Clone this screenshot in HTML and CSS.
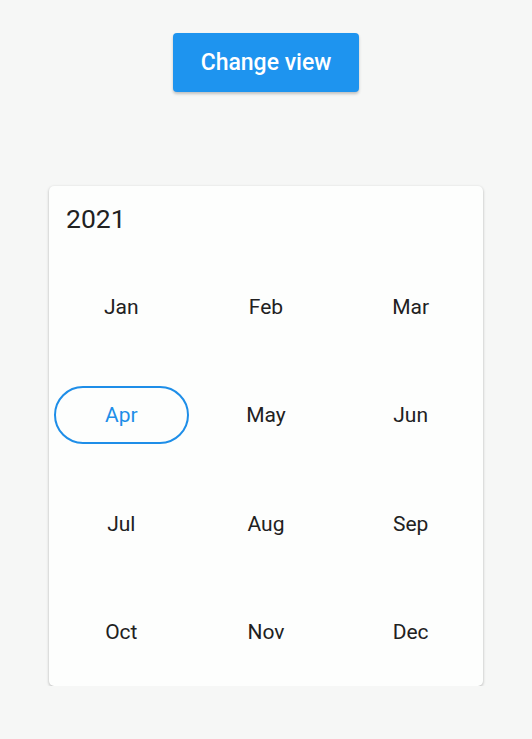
FILE: index.html
```html
<!DOCTYPE html>
<html>
<head>
<meta charset="utf-8">
<link rel="stylesheet" href="styles.css">
</head>
<body>
<div class="page">
  <button class="btn">Change view</button>
  <div class="card">
    <div class="year">2021</div>
    <div class="grid">
      <div class="cell"><span class="m">Jan</span></div>
      <div class="cell"><span class="m">Feb</span></div>
      <div class="cell"><span class="m">Mar</span></div>
      <div class="cell"><span class="m sel">Apr</span></div>
      <div class="cell"><span class="m">May</span></div>
      <div class="cell"><span class="m">Jun</span></div>
      <div class="cell"><span class="m">Jul</span></div>
      <div class="cell"><span class="m">Aug</span></div>
      <div class="cell"><span class="m">Sep</span></div>
      <div class="cell"><span class="m">Oct</span></div>
      <div class="cell"><span class="m">Nov</span></div>
      <div class="cell"><span class="m">Dec</span></div>
    </div>
  </div>
</div>
</body>
</html>
```

FILE: styles.css
```css
html, body {
  margin: 0;
  padding: 0;
  background: #f6f7f6;
  font-family: Roboto, "Liberation Sans", sans-serif;
}
.page {
  display: flex;
  flex-direction: column;
  align-items: center;
  padding-top: 33px;
}
.btn {
  width: 186px;
  height: 59px;
  border: none;
  border-radius: 4px;
  background: #1e94ef;
  color: #fff;
  font-family: Roboto, "Liberation Sans", sans-serif;
  font-weight: 500;
  font-size: 23px;
  box-shadow: 0 2px 3px rgba(0,0,0,0.22);
  padding: 0;
}
.card {
  margin-top: 94px;
  width: 434px;
  height: 500px;
  background: #fdfefd;
  border-radius: 5px;
  box-shadow: 0 1px 3px rgba(0,0,0,0.28);
  display: flex;
  flex-direction: column;
}
.year {
  height: 67px;
  box-sizing: border-box;
  padding: 18px 0 0 17px;
  font-size: 26.5px;
  color: #212121;
  line-height: 30px;
}
.grid {
  flex: 1;
  display: grid;
  grid-template-columns: repeat(3, 1fr);
  grid-template-rows: repeat(4, 1fr);
}
.cell {
  display: flex;
  align-items: center;
  justify-content: center;
  padding: 0 5px;
}
.m {
  font-size: 21px;
  color: #212121;
}
.sel {
  flex: 1;
  height: 58px;
  box-sizing: border-box;
  border: 2px solid #1e8ee8;
  border-radius: 29px;
  color: #1e8ee8;
  display: flex;
  align-items: center;
  justify-content: center;
}
```
